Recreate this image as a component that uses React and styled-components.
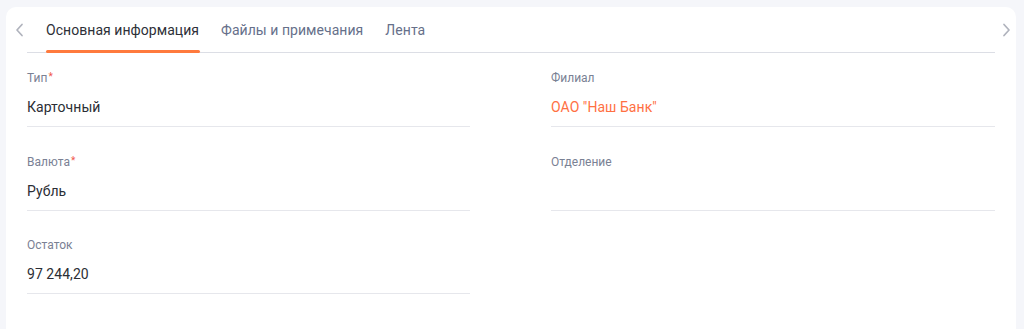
import styled, { createGlobalStyle } from "styled-components";

const Global = createGlobalStyle`
  html, body {
    margin: 0;
    padding: 0;
    background: #f5f6fa;
    font-family: Roboto, "Noto Sans", sans-serif;
  }
`;

const Page = styled.div`
  padding: 7px 8px 0 6px;
  height: 322px;
  overflow: hidden;
`;

const Card = styled.div`
  background: #fff;
  border-radius: 10px 10px 0 0;
  height: 340px;
  padding: 0 21px;
`;

const TabBar = styled.div`
  display: flex;
  align-items: flex-end;
  height: 45px;
  border-bottom: 1px solid #dcdee5;
  position: relative;
`;

const Arrow = styled.button`
  position: absolute;
  top: 16px;
  ${(p) => (p.$side === "left" ? "left: -14px;" : "right: -17px;")}
  width: 12px;
  height: 14px;
  padding: 0;
  border: 0;
  background: none;
  display: flex;
  align-items: center;
  justify-content: center;
`;

const Tab = styled.div`
  font-size: 14px;
  line-height: 16px;
  letter-spacing: 0.05px;
  color: ${(p) => (p.$active ? "#2d3038" : "#66708a")};
  padding: 0 0 14px;
  margin-left: ${(p) => (p.$first ? "19px" : "22px")};
  position: relative;
  &::after {
    content: "";
    display: ${(p) => (p.$active ? "block" : "none")};
    position: absolute;
    left: 0;
    right: -1px;
    bottom: -1px;
    height: 3px;
    border-radius: 2px;
    background: #ff7a3d;
  }
`;

const Grid = styled.div`
  display: grid;
  grid-template-columns: 443px 444px;
  justify-content: space-between;
  padding-top: 18px;
`;

const Column = styled.div`
  display: flex;
  flex-direction: column;
`;

const Field = styled.div`
  height: 83.5px;
  display: flex;
  flex-direction: column;
`;

const Label = styled.div`
  font-size: 12px;
  line-height: 14px;
  color: #7a8194;
  height: 14px;
`;

const Req = styled.span`
  color: #f0564a;
  font-size: 10px;
  vertical-align: 2px;
  line-height: 10px;
  margin-left: 1px;
`;

const Value = styled.div`
  font-size: 14px;
  line-height: 16px;
  letter-spacing: 0.05px;
  color: ${(p) => (p.$accent ? "#ff7043" : "#2b2e35")};
  margin-top: 14px;
  height: 16px;
  padding-bottom: 11px;
  border-bottom: 1px solid #e6e7ec;
`;

const Chevron = ({ dir }) => (
  <svg width="9" height="14" viewBox="0 0 9 14" fill="none">
    <path
      d={dir === "left" ? "M7 1.5L2 7l5 5.5" : "M2 1.5L7 7l-5 5.5"}
      stroke="#b0b3bd"
      strokeWidth="1.7"
      strokeLinecap="round"
      strokeLinejoin="round"
    />
  </svg>
);

const left = [
  { label: "Тип", required: true, value: "Карточный" },
  { label: "Валюта", required: true, value: "Рубль" },
  { label: "Остаток", value: "97 244,20" },
];

const right = [
  { label: "Филиал", value: "ОАО \"Наш Банк\"", accent: true },
  { label: "Отделение", value: "" },
];

const renderField = (f) => (
  <Field key={f.label}>
    <Label>
      {f.label}
      {f.required && <Req>*</Req>}
    </Label>
    <Value $accent={f.accent}>{f.value}</Value>
  </Field>
);

export default function App() {
  return (
    <>
      <Global />
      <Page>
        <Card>
          <TabBar>
            <Arrow $side="left">
              <Chevron dir="left" />
            </Arrow>
            <Tab $active $first>
              Основная информация
            </Tab>
            <Tab>Файлы и примечания</Tab>
            <Tab>Лента</Tab>
            <Arrow $side="right">
              <Chevron dir="right" />
            </Arrow>
          </TabBar>
          <Grid>
            <Column>{left.map(renderField)}</Column>
            <Column>{right.map(renderField)}</Column>
          </Grid>
        </Card>
      </Page>
    </>
  );
}
